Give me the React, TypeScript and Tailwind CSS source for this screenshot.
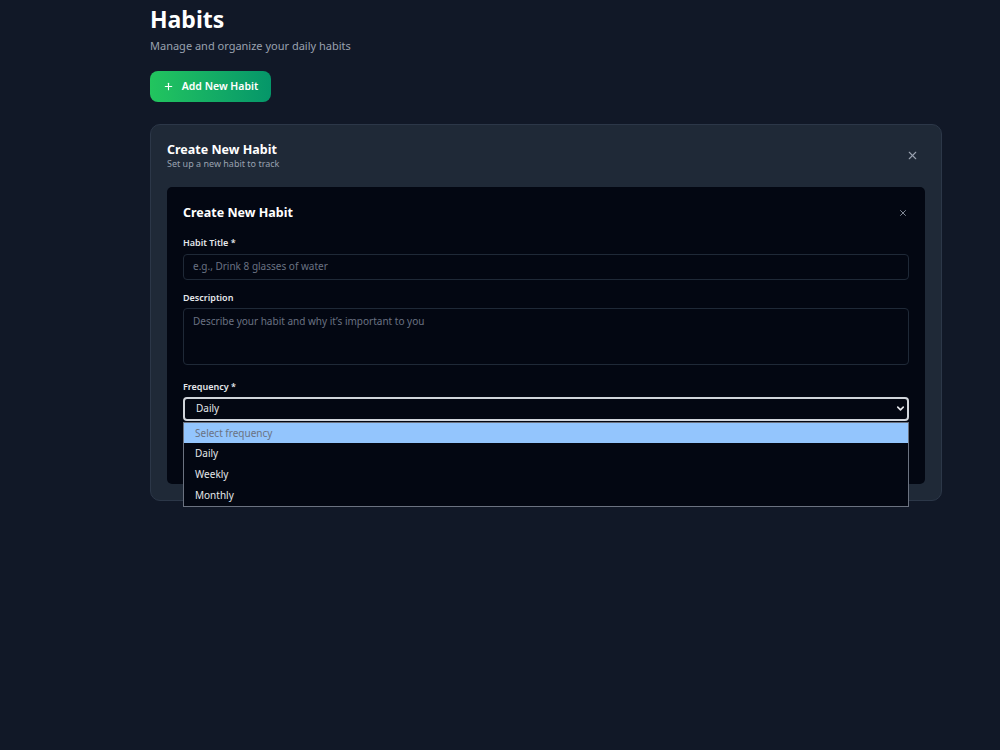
import { Plus, X, ChevronDown } from "lucide-react";

const options = ["Select frequency", "Daily", "Weekly", "Monthly"];

function Label({ children }: { children: React.ReactNode }) {
  return <label className="block h-[12px] text-[9px] font-semibold leading-[12px] text-gray-200">{children}</label>;
}

export default function App() {
  return (
    <div
      className="min-h-[750px] w-full bg-[#111827] text-white"
      style={{ fontFamily: '"Noto Sans", "Open Sans", sans-serif' }}
    >
      <div className="ml-[150px] w-[792px] pt-[4px]">
        <h1 className="text-[23px] font-bold leading-[30px] text-white">Habits</h1>
        <p className="mt-[5px] text-[11px] leading-[14px] text-gray-400">
          Manage and organize your daily habits
        </p>
        <button className="mt-[18px] flex h-[31px] w-[121px] items-center justify-center gap-[8px] rounded-lg bg-gradient-to-r from-[#22c55e] to-[#059669] text-[10.5px] font-semibold text-white">
          <Plus size={11} strokeWidth={2.5} />
          Add New Habit
        </button>

        <div className="mt-[22px] rounded-[10px] border border-[#2c3748] bg-[#1f2937] px-[16px] pb-[16px] pt-[17px]">
          <div className="flex items-start justify-between">
            <div>
              <h2 className="text-[12.5px] font-bold leading-[16px] text-white">Create New Habit</h2>
              <p className="text-[9px] leading-[12px] text-gray-400">Set up a new habit to track</p>
            </div>
            <button className="mr-[6px] mt-[7px] text-gray-400">
              <X size={13} strokeWidth={2} />
            </button>
          </div>

          <div className="mt-[17px] rounded-[5px] bg-[#030712] px-[16px] pb-[63px] pt-[18px]">
            <div className="flex items-center justify-between">
              <h3 className="text-[12.5px] font-bold leading-[16px] text-white">Create New Habit</h3>
              <button className="mr-[1px] text-gray-400">
                <X size={10} strokeWidth={2} />
              </button>
            </div>

            <div className="mt-[16px]">
              <Label>Habit Title *</Label>
              <div className="mt-[5px] flex h-[26px] items-center rounded-[4px] border border-[#1f2937] px-[9px] pb-[1px] text-[10px] text-gray-500">
                e.g., Drink 8 glasses of water
              </div>
            </div>
            <div className="mt-[12px]">
              <Label>Description</Label>
              <div className="mt-[4px] h-[57px] rounded-[4px] border border-[#1f2937] px-[9px] pt-[5px] text-[10px] leading-[14px] text-gray-500">
                Describe your habit and why it’s important to you
              </div>
            </div>
            <div className="mt-[16px]">
              <Label>Frequency *</Label>
              <div className="relative mt-[4px]">
                <div className="flex h-[24px] items-center justify-between rounded-[4px] border-2 border-[#d1d5db] pb-[1px] pl-[11px] pr-[1px] text-[10px] text-gray-200">
                  Daily
                  <ChevronDown size={11} strokeWidth={3.5} className="text-gray-200" />
                </div>
                <div className="absolute left-0 right-0 top-[25px] z-10 border border-[#6b7280] bg-[#030712]">
                  {options.map((o, i) => (
                    <div
                      key={o}
                      className={
                        i === 0
                          ? "flex h-[20px] items-center bg-[#93c5fd] px-[11px] text-[10px] text-gray-500"
                          : "flex h-[21px] items-center px-[11px] text-[10px] text-gray-200"
                      }
                    >
                      {o}
                    </div>
                  ))}
                </div>
              </div>
            </div>
          </div>
        </div>
      </div>
    </div>
  );
}
